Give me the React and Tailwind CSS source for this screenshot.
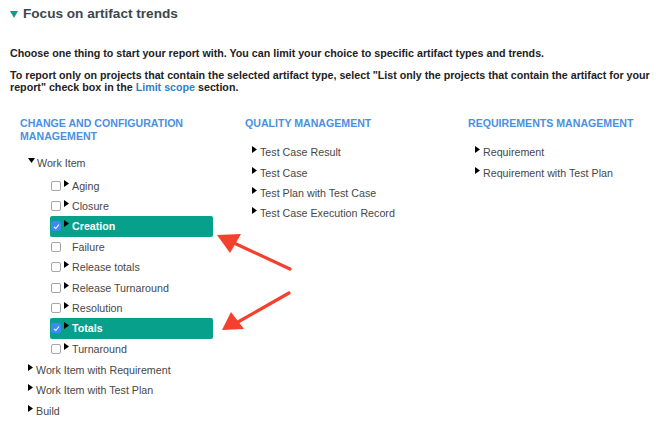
import React from "react";

const cm = [
  { label: "Aging", arrow: true },
  { label: "Closure", arrow: true },
  { label: "Creation", arrow: true, checked: true },
  { label: "Failure", arrow: false },
  { label: "Release totals", arrow: true },
  { label: "Release Turnaround", arrow: true },
  { label: "Resolution", arrow: true },
  { label: "Totals", arrow: true, checked: true },
  { label: "Turnaround", arrow: true },
];

const qm = ["Test Case Result", "Test Case", "Test Plan with Test Case", "Test Case Execution Record"];
const rm = ["Requirement", "Requirement with Test Plan"];

function Tri({ down = false }) {
  return down ? (
    <svg width="7" height="5" viewBox="0 0 7 5" className="mb-[5px] shrink-0">
      <path d="M0 0 L7 0 L3.5 5 Z" fill="#000" />
    </svg>
  ) : (
    <svg width="5" height="7" viewBox="0 0 5 7" className="mb-[5px] shrink-0">
      <path d="M0 0 L5 3.5 L0 7 Z" fill="#000" />
    </svg>
  );
}

function Check({ checked }) {
  return checked ? (
    <span className="w-[10px] h-[10px] rounded-[2px] bg-[#3d8bf0] flex items-center justify-center shrink-0">
      <svg width="7" height="7" viewBox="0 0 7 7">
        <path d="M1 3.8 L2.8 5.5 L6 1.5" stroke="#fff" strokeWidth="1.1" fill="none" />
      </svg>
    </span>
  ) : (
    <span className="w-[10px] h-[10px] rounded-[2px] border border-[#a6a6a6] bg-white shrink-0" />
  );
}

function Item({ label }) {
  return (
    <div className="flex items-center h-[20.4px] gap-[3px]">
      <Tri />
      <span>{label}</span>
    </div>
  );
}

export default function App() {
  return (
    <div
      className="relative w-[662px] h-[431px] bg-white overflow-hidden text-[#474747]"
      style={{ fontFamily: '"Liberation Sans", Arial, sans-serif' }}
    >
      <div className="flex items-center gap-[5px] pl-[10px] pt-[5px] h-[23px]">
        <svg width="8" height="7" viewBox="0 0 8 7">
          <path d="M0 0 L8 0 L4 7 Z" fill="#0c9c8a" />
        </svg>
        <span className="text-[13.6px] font-bold text-[#3b474c]">Focus on artifact trends</span>
      </div>

      <div className="pl-[10px] text-[10.7px] font-bold text-[#222] leading-[12px]">
        <p className="mt-[24px]">
          Choose one thing to start your report with. You can limit your choice to specific artifact types and trends.
        </p>
        <p className="mt-[10px]">
          To report only on projects that contain the selected artifact type, select "List only the projects that contain the artifact for your
        </p>
        <p>
          report" check box in the <span className="text-[#2f7fc8]">Limit scope</span> section.
        </p>
      </div>

      <div className="flex mt-[24px] text-[10.7px]">
        <div className="w-[245px] pl-[20px]">
          <h3 className="text-[10.6px] font-bold leading-[13px] text-[#4a90e2] uppercase">
            Change and configuration
            <br />
            management
          </h3>
          <div className="mt-[10px] pl-[8px]">
            <div className="flex items-center h-[20.4px] gap-[2px]">
              <Tri down />
              <span>Work Item</span>
            </div>
            <div className="pt-[2px]">
              {cm.map((r) => (
                <div
                  key={r.label}
                  className={`flex items-center h-[20.4px] ml-[22px] w-[163px] pl-[1px] gap-[3px] rounded-[2px] ${
                    r.checked ? "bg-[#06a08b] text-white" : ""
                  }`}
                >
                  <Check checked={r.checked} />
                  <span className="w-[5px] flex">{r.arrow && <Tri />}</span>
                  <span className={r.checked ? "font-bold" : ""}>{r.label}</span>
                </div>
              ))}
            </div>
            <div className="pt-[1px]">
              <Item label="Work Item with Requirement" />
              <Item label="Work Item with Test Plan" />
              <Item label="Build" />
            </div>
          </div>
        </div>

        <div className="w-[223px]">
          <h3 className="text-[10.6px] font-bold leading-[13px] text-[#4a90e2] uppercase">Quality management</h3>
          <div className="mt-[12px] pl-[7px]">
            {qm.map((t) => (
              <Item key={t} label={t} />
            ))}
          </div>
        </div>

        <div className="flex-1">
          <h3 className="text-[10.6px] font-bold leading-[13px] text-[#4a90e2] uppercase">Requirements management</h3>
          <div className="mt-[12px] pl-[7px]">
            {rm.map((t) => (
              <Item key={t} label={t} />
            ))}
          </div>
        </div>
      </div>

      <svg className="absolute left-0 top-0" width="662" height="431" viewBox="0 0 662 431">
        <g stroke="#f4402c" strokeWidth="3.2" strokeLinecap="round">
          <line x1="290" y1="269" x2="234" y2="243" />
          <line x1="289" y1="293" x2="238" y2="322" />
        </g>
        <g fill="#f4402c">
          <path d="M217 235 L241 234 L230 253 Z" />
          <path d="M222 330 L231 312 L244 329 Z" />
        </g>
      </svg>
    </div>
  );
}
